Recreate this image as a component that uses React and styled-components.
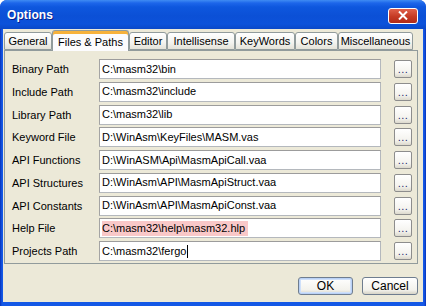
import React from 'react';
import styled, { createGlobalStyle } from 'styled-components';

const GlobalStyle = createGlobalStyle`
  html, body {
    margin: 0;
    padding: 0;
    background: #ffffff;
  }
  body {
    font-family: "Liberation Sans", Arial, sans-serif;
    font-size: 11px;
    color: #000000;
  }
`;

const Window = styled.div`
  width: 426px;
  height: 306px;
  display: flex;
  flex-direction: column;
  background: #0a3fcf;
  border-radius: 7px 7px 0 0;
  overflow: hidden;
  box-sizing: border-box;
`;

const TitleBar = styled.div`
  height: 29px;
  flex: 0 0 29px;
  display: flex;
  align-items: center;
  padding: 0 8px 0 7px;
  background: linear-gradient(
    #3f8cf3 0px,
    #1d66ea 3px,
    #0e57de 7px,
    #0b50d6 16px,
    #0c52da 24px,
    #0a48c8 29px
  );
`;

const Title = styled.span`
  color: #ffffff;
  font-family: "Liberation Sans", Arial, sans-serif;
  font-weight: bold;
  font-size: 12px;
  letter-spacing: 0.1px;
  text-shadow: 1px 1px 0 #0a1e8c;
  margin-top: 1px;
`;

const CloseButton = styled.div`
  margin-left: auto;
  width: 28px;
  height: 14px;
  border: 1px solid #ffffff;
  border-radius: 3px;
  background: linear-gradient(#e0604a, #c53a24 55%, #b02a18);
  display: flex;
  align-items: center;
  justify-content: center;
  margin-top: 2px;
`;

const Frame = styled.div`
  flex: 1;
  display: flex;
  padding: 0 3px 4px 3px;
  background: linear-gradient(90deg, #0831b8, #1458e6 2px, #1458e6 calc(100% - 2px), #0831b8);
`;

const Body = styled.div`
  flex: 1;
  display: flex;
  flex-direction: column;
  background: #ece9d8;
  padding: 1px 5px 0 1px;
`;

const TabRow = styled.div`
  display: flex;
  align-items: flex-end;
  height: 20px;
  position: relative;
  z-index: 1;
`;

const Tab = styled.div`
  box-sizing: border-box;
  width: ${(p) => p.$w}px;
  height: ${(p) => (p.$active ? 21 : 18)}px;
  margin-bottom: ${(p) => (p.$active ? -1 : 0)}px;
  display: flex;
  align-items: center;
  justify-content: center;
  border: 1px solid #919b9c;
  border-bottom: ${(p) => (p.$active ? 'none' : '1px solid #919b9c')};
  border-radius: 3px 3px 0 0;
  background: ${(p) =>
    p.$active ? '#fcfcfe' : 'linear-gradient(#ffffff, #f3f3ef 60%, #e4e2d8)'};
  box-shadow: ${(p) => (p.$active ? 'inset 0 3px 0 #f7b23b, inset 0 1px 0 #e68b2c' : 'none')};
  padding-top: ${(p) => (p.$active ? 2 : 0)}px;
  white-space: nowrap;
`;

const Panel = styled.div`
  box-sizing: border-box;
  height: 214px;
  border: 1px solid #919b9c;
  background: #ece9d8;
  padding: 8px 5px 2px 7px;
  display: grid;
  grid-template-columns: 87px 295px 18px;
  grid-auto-rows: 20px;
  row-gap: 2.75px;
  align-items: center;
`;

const Label = styled.div`
  white-space: nowrap;
`;

const Field = styled.div`
  box-sizing: border-box;
  width: 282px;
  height: 20px;
  background: #ffffff;
  border: 1px solid #b4b8bd;
  border-top-color: #9c9c9c;
  border-left-color: #a4a4a4;
  display: flex;
  align-items: center;
  padding-left: 2px;
  white-space: nowrap;
`;

const Selected = styled.span`
  background: ${(p) => (p.$hl ? '#f9c8c8' : 'transparent')};
  line-height: 15px;
  padding-right: ${(p) => (p.$hl ? 3 : 0)}px;
`;

const Caret = styled.span`
  display: inline-block;
  width: 1px;
  height: 13px;
  background: #000000;
  margin-left: 1px;
`;

const DotsButton = styled.div`
  box-sizing: border-box;
  width: 18px;
  height: 18px;
  border: 1px solid #8d8d8d;
  border-radius: 2px;
  background: linear-gradient(#ffffff, #f4f3ee 70%, #dcd9cd);
  display: flex;
  align-items: flex-end;
  justify-content: center;
  padding-bottom: 4px;
  font-size: 11px;
  line-height: 8px;
  color: #1c2a6e;
  letter-spacing: 0.5px;
`;

const Footer = styled.div`
  display: flex;
  justify-content: flex-end;
  gap: 9px;
  padding-top: 13px;
`;

const Button = styled.div`
  box-sizing: border-box;
  width: ${(p) => p.$w}px;
  height: 18px;
  border: 1px solid #6f7d8f;
  border-radius: 3px;
  background: linear-gradient(#ffffff, #f3f2ec 75%, #d6d3c6);
  display: flex;
  align-items: center;
  justify-content: center;
  box-shadow: ${(p) => (p.$default ? 'inset 0 0 0 1px #b9d1f6, inset 0 0 0 2px #cfe0fa' : 'none')};
  font-size: 12px;
`;

const tabs = [
  { label: 'General', w: 48 },
  { label: 'Files & Paths', w: 77, active: true },
  { label: 'Editor', w: 38 },
  { label: 'Intellisense', w: 68 },
  { label: 'KeyWords', w: 60 },
  { label: 'Colors', w: 43 },
  { label: 'Miscellaneous', w: 75 },
];

const rows = [
  { label: 'Binary Path', value: 'C:\\masm32\\bin' },
  { label: 'Include Path', value: 'C:\\masm32\\include' },
  { label: 'Library Path', value: 'C:\\masm32\\lib' },
  { label: 'Keyword File', value: 'D:\\WinAsm\\KeyFiles\\MASM.vas' },
  { label: 'API Functions', value: 'D:\\WinASM\\Api\\MasmApiCall.vaa' },
  { label: 'API Structures', value: 'D:\\WinAsm\\API\\MasmApiStruct.vaa' },
  { label: 'API Constants', value: 'D:\\WinAsm\\API\\MasmApiConst.vaa' },
  { label: 'Help File', value: 'C:\\masm32\\help\\masm32.hlp', hl: true },
  { label: 'Projects Path', value: 'C:\\masm32\\fergo', caret: true },
];

const App = () => {
  return (
    <>
      <GlobalStyle />
      <Window>
        <TitleBar>
          <Title>Options</Title>
          <CloseButton>
            <svg width="10" height="9" viewBox="0 0 10 9">
              <path d="M1 0.5 L9 8.5 M9 0.5 L1 8.5" stroke="#ffffff" strokeWidth="2" />
            </svg>
          </CloseButton>
        </TitleBar>
        <Frame>
          <Body>
            <TabRow>
              {tabs.map((t) => (
                <Tab key={t.label} $w={t.w} $active={t.active}>
                  {t.label}
                </Tab>
              ))}
            </TabRow>
            <Panel>
              {rows.map((r) => (
                <React.Fragment key={r.label}>
                  <Label>{r.label}</Label>
                  <Field>
                    <Selected $hl={r.hl}>{r.value}</Selected>
                    {r.caret && <Caret />}
                  </Field>
                  <DotsButton>...</DotsButton>
                </React.Fragment>
              ))}
            </Panel>
            <Footer>
              <Button $w={55} $default>OK</Button>
              <Button $w={56}>Cancel</Button>
            </Footer>
          </Body>
        </Frame>
      </Window>
    </>
  );
};

export default App;
